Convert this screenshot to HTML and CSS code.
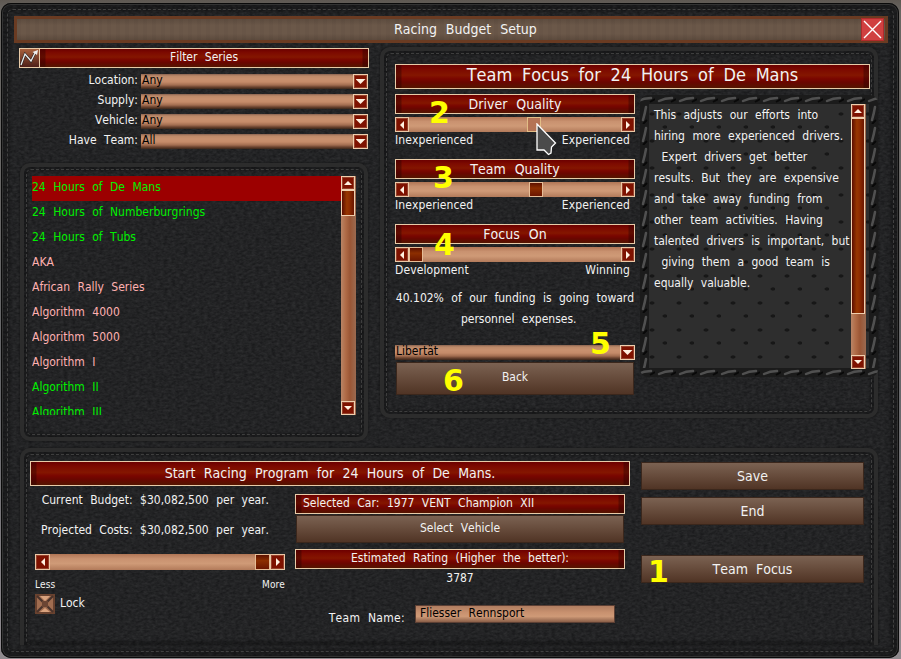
FILE: index.html
```html
<!DOCTYPE html>
<html lang="en">
<head>
<meta charset="UTF-8">
<title>Racing Budget Setup</title>
<link rel="stylesheet" href="styles.css">
</head>
<body>
<main class="window">
<header class="titlebar">
	<h1>Racing Budget Setup</h1>
	<button type="button" class="close"><svg width="19" height="19" viewBox="0 0 19 19"><path d="M1 1L18 18M18 1L1 18" stroke="#fff" stroke-width="1.4" fill="none"/></svg></button>
</header>

<div class="top">
	<div class="left">
		<div class="filter-head">
			<span class="chart"><svg width="19" height="18" viewBox="0 0 19 18"><path d="M1 16L5 5L11 12L15 4" fill="none" stroke="#222" stroke-width="2.4"/><path d="M1 16L5 5L11 12L15 4" fill="none" stroke="#eee" stroke-width="1.3"/><path d="M12.500 3L18 1L17 6Z" fill="#eee"/></svg></span>
			<h2 class="bar">Filter Series</h2>
		</div>
		<div class="filters">
			<label>Location:</label><div class="select">Any<i class="btn down"></i></div>
			<label>Supply:</label><div class="select">Any<i class="btn down"></i></div>
			<label>Vehicle:</label><div class="select">Any<i class="btn down"></i></div>
			<label>Have Team:</label><div class="select">All<i class="btn down"></i></div>
		</div>
		<section class="panel series">
			<ul>
				<li class="have selected">24 Hours of De Mans</li>
				<li class="have">24 Hours of Numberburgrings</li>
				<li class="have">24 Hours of Tubs</li>
				<li>AKA</li>
				<li>African Rally Series</li>
				<li>Algorithm 4000</li>
				<li>Algorithm 5000</li>
				<li>Algorithm I</li>
				<li class="have">Algorithm II</li>
				<li class="have">Algorithm III</li>
			</ul>
			<div class="scroll"><i class="btn up"></i><i class="thumb"></i><i class="btn down"></i></div>
		</section>
	</div>

	<section class="panel focus">
		<h2 class="bar big">Team Focus for 24 Hours of De Mans</h2>
		<div class="focus-body">
			<div class="settings">
				<div class="setting">
					<h3 class="bar">Driver Quality</h3>
					<div class="slider"><i class="btn prev"></i><i class="knob hover driver"></i><i class="btn next"></i></div>
					<div class="ends"><span>Inexperienced</span><span>Experienced</span></div>
				</div>
				<div class="setting">
					<h3 class="bar">Team Quality</h3>
					<div class="slider"><i class="btn prev"></i><i class="knob team"></i><i class="btn next"></i></div>
					<div class="ends"><span>Inexperienced</span><span>Experienced</span></div>
				</div>
				<div class="setting">
					<h3 class="bar">Focus On</h3>
					<div class="slider"><i class="btn prev"></i><i class="knob"></i><i class="btn next"></i></div>
					<div class="ends"><span>Development</span><span>Winning</span></div>
				</div>
				<p class="funding">40.102% of our funding is going toward<br>&nbsp;personnel expenses.</p>
				<div class="select">Libertät<i class="btn down"></i></div>
				<button type="button" class="action back">Back</button>
			</div>
			<div class="info">
				<p>This adjusts our efforts into
hiring more experienced drivers.
 Expert drivers get better
results. But they are expensive
and take away funding from
other team activities. Having
talented drivers is important, but
 giving them a good team is
equally valuable.</p>
				<div class="scroll"><i class="btn up"></i><i class="thumb"></i><i class="btn down"></i></div>
			</div>
		</div>
	</section>
</div>

<section class="panel program">
	<div class="program-main">
		<h2 class="bar">Start Racing Program for 24 Hours of De Mans.</h2>
		<div class="program-cols">
			<div class="budget">
				<p>Current Budget: $30,082,500 per year.</p>
				<p>Projected Costs: $30,082,500 per year.</p>
				<div class="slider"><i class="btn prev"></i><i class="knob"></i><i class="btn next"></i></div>
				<div class="ends"><span>Less</span><span>More</span></div>
				<div class="lock"><svg width="20" height="20" viewBox="0 0 20 20"><rect width="20" height="20" fill="#69422f"/><rect x="2" y="2" width="16" height="16" fill="#a06d50"/><path d="M5 2H15L10 7ZM5 18H15L10 14Z" fill="#d9a27e"/><path d="M2 2L18 18M18 2L2 18" stroke="#49332b" stroke-width="2.2"/><rect x="7" y="7" width="6" height="6" fill="#6b4533"/></svg>Lock</div>
			</div>
			<div class="car">
				<h3 class="bar selected-car">Selected Car: 1977 VENT Champion XII</h3>
				<button type="button" class="action">Select Vehicle</button>
				<h3 class="bar">Estimated Rating (Higher the better):</h3>
				<p class="rating">3787</p>
				<div class="team-name"><label>Team Name:</label><span class="field">Fliesser Rennsport</span></div>
			</div>
		</div>
	</div>
	<div class="actions">
		<button type="button" class="action">Save</button>
		<button type="button" class="action">End</button>
		<button type="button" class="action team-focus">Team Focus</button>
	</div>
</section>
</main>

<!-- tutorial step numbers -->
<b class="step s1">1</b>
<b class="step s2">2</b>
<b class="step s3">3</b>
<b class="step s4">4</b>
<b class="step s5">5</b>
<b class="step s6">6</b>
<svg class="cursor" width="21" height="33" viewBox="0 0 21 33"><path d="M1 1L19.500 20L15.500 24L15 30L12.500 31.500L8 27H1Z" fill="#4b4b4b" stroke="#fff" stroke-width="1.300"/></svg>
</body>
</html>
```
FILE: styles.css
```css
:root {
	--grain: url("data:image/svg+xml,%3Csvg xmlns='http://www.w3.org/2000/svg' width='300' height='300'%3E%3Cfilter id='n' x='0' y='0' width='100%25' height='100%25' color-interpolation-filters='sRGB'%3E%3CfeTurbulence type='fractalNoise' baseFrequency='.25 .42' numOctaves='3' seed='4' stitchTiles='stitch'/%3E%3CfeColorMatrix values='.11 0 0 0 .082 .11 0 0 0 .084 .11 0 0 0 .09 0 0 0 0 1'/%3E%3C/filter%3E%3Crect width='300' height='300' filter='url(%23n)'/%3E%3C/svg%3E");
	--stitch-h: url("data:image/svg+xml,%3Csvg xmlns='http://www.w3.org/2000/svg' width='21' height='9'%3E%3Crect width='21' height='9' fill='%231b1b1b'/%3E%3Cpath d='M4 6Q10 3 17 3' stroke='%23505050' stroke-width='2.500' stroke-linecap='round' fill='none'/%3E%3Cpath d='M16 7L21 4' stroke='%23080808' stroke-width='2'/%3E%3C/svg%3E");
	--stitch-v: url("data:image/svg+xml,%3Csvg xmlns='http://www.w3.org/2000/svg' width='9' height='21'%3E%3Crect width='9' height='21' fill='%231b1b1b'/%3E%3Cpath d='M6 4Q5 10 3 17' stroke='%23505050' stroke-width='2.500' stroke-linecap='round' fill='none'/%3E%3Cpath d='M3 21L7 17' stroke='%23080808' stroke-width='2'/%3E%3C/svg%3E");
}

* {
	box-sizing: border-box;
}

body {
	margin: 0;
	width: 901px;
	height: 659px;
	overflow: hidden;
	position: relative;
	background: linear-gradient(#5e5852 0, #6a6763 12px, #66676a 60%, #8f8a8e 650px);
	font: 12px/15px "DejaVu Sans Condensed", "DejaVu Sans", sans-serif;
	font-stretch: condensed;
	font-kerning: none;
	word-spacing: 4px;
	color: #f2f2f2;
}

h1, h2, h3, p, ul {
	margin: 0;
	padding: 0;
	font-size: inherit;
	font-weight: normal;
}

i {
	display: block;
	flex: none;
}

button {
	font: inherit;
	font-kerning: none;
	word-spacing: inherit;
	color: inherit;
	padding: 0;
}

.window {
	position: relative;
	width: 898px;
	height: 655px;
	margin: 3px 0 0 1px;
	float: left;
	padding: 13px 11px 0 13px;
	border-radius: 10px;
	background: var(--grain);
	box-shadow: inset 0 0 0 1px #0a0a0a, inset 0 0 0 2px #333, inset 0 0 3px 9px rgba(0,0,0,.25);
}

.window::before {
	content: "";
	position: absolute;
	inset: 6px 5px 6px 6px;
	border: 1px dashed #404040;
	border-radius: 6px;
	pointer-events: none;
}

.titlebar {
	position: relative;
	height: 27px;
	border: 3px solid #6a3b22;
	background: repeating-linear-gradient(90deg, rgba(0,0,0,.03) 0 4px, transparent 4px 9px), linear-gradient(#5d4c3f, #6b5849 30%, #6b5849 70%, #5c4a3d);
	display: flex;
	justify-content: flex-end;
}

.titlebar h1 {
	flex: 1;
	padding-left: 377px;
	font-size: 14px;
	line-height: 21px;
	word-spacing: 5px;
}

.close {
	width: 23px;
	height: 23px;
	margin: -1px 1px;
	border: 1px solid #b02a2a;
	background: #d04040;
	display: flex;
	align-items: center;
	justify-content: center;
}

.top {
	display: flex;
	margin-top: 4px;
}

.left {
	width: 350px;
	margin: 1px 11px 0 5px;
}

.bar {
	height: 20px;
	border: 1px solid #e8cba8;
	line-height: 17px;
	text-align: center;
	background: linear-gradient(90deg, rgba(40,0,0,.4) 0 5px, transparent 6px calc(100% - 6px), rgba(40,0,0,.4) calc(100% - 5px)), linear-gradient(#6c0000, #7d0a00 20%, #841600 45%, #7a0600 60%, #6a0600 75%, #541500);
}

.filter-head {
	display: flex;
}

.filter-head .bar {
	flex: 1;
	border-left: 0;
}

.chart {
	width: 21px;
	height: 20px;
	border: 1px solid #e8cba8;
	background: linear-gradient(#a8603c, #4e1f18);
}

.filters {
	display: grid;
	grid-template-columns: 119px 227px;
	gap: 5px 3px;
	margin: 6px 0 0;
}

.filters label {
	text-align: right;
	line-height: 12px;
	white-space: nowrap;
}

.select {
	height: 15px;
	display: flex;
	justify-content: space-between;
	color: #000;
	line-height: 12px;
	padding-left: 1px;
	background: linear-gradient(#8a6350, #bd8a69 2px, #c9916f 5px, #c58b69 8px, #a26d50 11px, #6b432f 13px, #3c2619);
}

/* small square arrow buttons shared by selects, sliders and scrollbars */
.btn {
	width: 15px;
	height: 15px;
	border: 1px solid #f0cfae;
	background: #7e1200;
	box-shadow: inset 0 0 0 1px #96402a;
	display: flex;
	align-items: center;
	justify-content: center;
}

.btn::before {
	content: "";
	width: 10px;
	height: 5px;
	background: #fff0df;
	clip-path: polygon(0 0, 100% 0, 50% 100%);
}

.panel {
	position: relative;
	border: 4px solid #2c2c2c;
	border-radius: 10px;
	background: var(--grain);
	box-shadow: inset 0 0 2px 4px rgba(0,0,0,.25), 0 0 2px #111;
}

.panel::before {
	content: "";
	position: absolute;
	inset: 2px;
	border: 1px dashed #3e3e3e;
	border-radius: 5px;
	pointer-events: none;
}

.series {
	width: 348px;
	height: 278px;
	margin: 14px 0 0 1px;
	padding: 9px 8px;
	display: flex;
}

.series ul {
	position: relative;
	width: 309px;
	height: 239px;
	overflow: hidden;
	list-style: none;
}

.series li {
	height: 25px;
	line-height: 22px;
	color: #ffb0b0;
}

.series .have {
	color: #00f000;
}

.series .selected {
	background: #9c0000;
}

.scroll {
	position: relative;
	width: 15px;
	display: flex;
	flex-direction: column;
	background: linear-gradient(90deg, #b98465, #b06c48 30%, #9a5635 60%, #9b6a50);
}

.scroll .btn {
	height: 14px;
	width: 14px;
}

.scroll .btn::before, .slider .btn::before {
	width: 8px;
	height: 4px;
}

.scroll .down {
	margin-top: auto;
}

.up::before {
	transform: rotate(180deg);
}

.scroll .thumb {
	width: 14px;
	height: 26px;
	border: 1px solid #f0cfae;
	background: linear-gradient(90deg, #5c0d00, #973600 40%, #902d00 60%, #6b1500);
}

.series .scroll {
	height: 239px;
}

.focus {
	width: 498px;
	height: 371px;
	padding: 13px 0 0 11px;
}

.big {
	position: relative;
	width: 475px;
	height: 25px;
	font-size: 18px;
	line-height: 20px;
	word-spacing: 4.6px;
}

.focus-body {
	display: flex;
	position: relative;
}

.settings {
	flex: none;
	width: 240px;
	padding-top: 5px;
	margin-right: 5px;
}

.setting {
	height: 65px;
}

.setting .bar {
	font-size: 14px;
	line-height: 18px;
	word-spacing: 5px;
}

.slider {
	height: 15px;
	margin-top: 3px;
	display: flex;
	background: linear-gradient(#b07555, #c99270 30%, #cf9a77 60%, #b27a5a);
}

.slider .btn {
	width: 14px;
	height: 15px;
	border-color: #ecc8a6;
}

.slider .next {
	margin-left: auto;
}

.prev::before {
	transform: rotate(90deg);
}

.next::before {
	transform: rotate(-90deg);
}

.knob {
	width: 14px;
	height: 15px;
	border: 1px solid #e6bc96;
	background: linear-gradient(#5e1200, #8c2e00 40%, #6b1600);
}

.knob.hover {
	background: #b57355;
	border-color: #e2bd86;
}

.driver {
	margin-left: 118px;
}

.team {
	margin-left: 120px;
}

.ends {
	display: flex;
	justify-content: space-between;
	padding: 1px 5px 0 0;
	letter-spacing: .1px;
}

.funding {
	margin: -1px -10px 0;
	line-height: 21px;
	text-align: center;
	height: 57px;
}

.action {
	display: block;
	border: 1px solid #3b271c;
	background: linear-gradient(#7b6252, #664b3b 50%, #503425);
	text-align: center;
}

.back {
	width: 238px;
	height: 33px;
	margin: 2px 0 0 1px;
	padding-bottom: 3px;
}

.info {
	flex: none;
	width: 238px;
	height: 282px;
	margin-top: 6px;
	padding: 9px 12px 8px 14px;
	display: flex;
	border-radius: 8px;
	background:
		var(--stitch-h) 15px 0 / 21px 9px repeat-x,
		var(--stitch-h) 15px 100% / 21px 9px repeat-x,
		var(--stitch-v) 0 8px / 9px 21px repeat-y,
		var(--stitch-v) 100% 8px / 9px 21px repeat-y,
		radial-gradient(ellipse 3px 2px at 12px 19px, #171717 60%, transparent) 0 0 / 27px 27px,
		radial-gradient(ellipse 3px 2px at 25px 5px, #171717 60%, transparent) 0 0 / 27px 27px,
		#2e2e2e;
}

.info p {
	width: 197px;
	padding-top: 1px;
	white-space: pre;
	line-height: 21px;
}

.info .scroll {
	height: 265px;
}

.info .thumb {
	height: 196px;
}

.program {
	width: 858px;
	height: 197px;
	margin: 7px 0 0 6px;
	padding: 9px 0 0 6px;
	display: flex;
	border-bottom: 0;
	border-radius: 10px 10px 0 0;
}

.program::before {
	bottom: 0;
	border-bottom: 0;
}

.program-main {
	position: relative;
	width: 600px;
}

.program-main > .bar {
	height: 25px;
	font-size: 14px;
	line-height: 22px;
	word-spacing: 4.3px;
}

.program-cols {
	display: flex;
}

.budget {
	width: 250px;
	margin: 7px 10px 0 5px;
}

.budget p {
	height: 30px;
	line-height: 15px;
	padding-right: 16px;
	text-align: right;
	white-space: nowrap;
}

.budget .slider {
	height: 16px;
	margin-top: 1px;
}

.budget .slider i {
	height: 16px;
	width: 15px;
}

.budget .knob {
	margin-left: auto;
}

.budget .next {
	margin-left: 0;
}

.budget .ends {
	font-size: 10px;
	padding: 7px 0 0;
}

.lock {
	display: flex;
	gap: 5px;
	margin-top: 2px;
	line-height: 18px;
}

.car {
	width: 330px;
	margin-top: 8px;
}

.selected-car {
	text-align: left;
	padding-left: 7px;
}

.car .action {
	width: 328px;
	height: 28px;
	margin: 1px 0 6px 1px;
	padding-bottom: 1px;
}

.rating {
	text-align: center;
	line-height: 18px;
}

.team-name {
	display: flex;
	justify-content: flex-end;
	margin: 18px 10px 0 0;
}

.team-name label {
	padding: 6px 10px 0 0;
	letter-spacing: .3px;
}

.field {
	width: 200px;
	height: 18px;
	padding-left: 4px;
	line-height: 15px;
	color: #000;
	border: 1px solid #5d4034;
	background: linear-gradient(#b07d60, #c8916f 40%, #cf9a77 65%, #8a5f48);
}

.actions {
	width: 223px;
	margin: 1px 0 0 11px;
	font-size: 14px;
}

.actions .action {
	width: 223px;
	height: 28px;
	margin-bottom: 7px;
}

.actions .team-focus {
	margin-top: 30px;
}

.step {
	position: absolute;
	font: bold 30px/30px "DejaVu Sans", sans-serif;
	color: #ff0;
}

.s1 { left: 648px; top: 557px; }
.s2 { left: 429px; top: 98px; }
.s3 { left: 433px; top: 163px; }
.s4 { left: 434px; top: 230px; }
.s5 { left: 590px; top: 329px; }
.s6 { left: 443px; top: 366px; }

.cursor {
	position: absolute;
	left: 536px;
	top: 123px;
}
```
